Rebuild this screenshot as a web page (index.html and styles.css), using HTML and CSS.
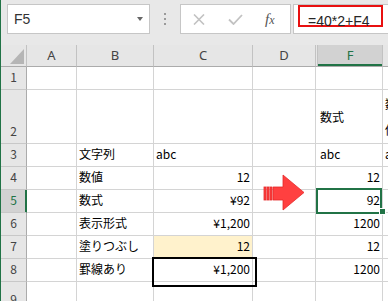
FILE: index.html
```html
<!DOCTYPE html>
<html lang="ja">
<head>
<meta charset="utf-8">
<title>Excel</title>
<link rel="stylesheet" href="styles.css">
</head>
<body>
<div class="app">
  <div class="toolbar">
    <div class="namebox"><span class="nb-text">F5</span><span class="nb-caret"></span></div>
    <div class="grip"><i></i><i></i><i></i></div>
    <div class="fbtns">
      <svg class="ico-x" width="12" height="11" viewBox="0 0 12 11"><path d="M1 0.5 L11 10.5 M11 0.5 L1 10.5" stroke="#c2c2c2" stroke-width="1.6" fill="none"/></svg>
      <svg class="ico-check" width="15" height="11" viewBox="0 0 15 11"><path d="M1 5.5 L5.5 10 L14 1" stroke="#c2c2c2" stroke-width="1.8" fill="none"/></svg>
      <span class="fx"><i class="fx-f">f</i><i class="fx-x">x</i></span>
    </div>
    <div class="finput"><div class="redbox"><span class="formula">=40*2+F4</span></div></div>
  </div>
  <div class="sheet">
    <!-- header row -->
    <div class="hd corner"><span class="tri"></span></div>
    <div class="hd col">A</div>
    <div class="hd col">B</div>
    <div class="hd col">C</div>
    <div class="hd col">D</div>
    <div class="hd col"></div>
    <div class="hd col sel-col">F</div>
    <div class="hd col">G</div>
    <!-- row 1 -->
    <div class="rh">1</div>
    <div class="c"></div><div class="c"></div><div class="c"></div><div class="c"></div><div class="c"></div><div class="c"></div><div class="c"></div>
    <!-- row 2 -->
    <div class="rh">2</div>
    <div class="c"></div><div class="c"></div><div class="c"></div><div class="c"></div><div class="c"></div>
    <div class="c mid">数式</div>
    <div class="c mid"><span class="wrap">数値<br>値</span></div>
    <!-- row 3 -->
    <div class="rh">3</div>
    <div class="c"></div>
    <div class="c">文字列</div>
    <div class="c">abc</div>
    <div class="c"></div><div class="c"></div>
    <div class="c">abc</div>
    <div class="c">abc</div>
    <!-- row 4 -->
    <div class="rh">4</div>
    <div class="c"></div>
    <div class="c">数値</div>
    <div class="c r">12</div>
    <div class="c"></div><div class="c"></div>
    <div class="c r">12</div>
    <div class="c"></div>
    <!-- row 5 -->
    <div class="rh sel-row">5</div>
    <div class="c"></div>
    <div class="c">数式</div>
    <div class="c r">¥92</div>
    <div class="c"></div><div class="c"></div>
    <div class="c r">92</div>
    <div class="c"></div>
    <!-- row 6 -->
    <div class="rh">6</div>
    <div class="c"></div>
    <div class="c">表示形式</div>
    <div class="c r">¥1,200</div>
    <div class="c"></div><div class="c"></div>
    <div class="c r">1200</div>
    <div class="c"></div>
    <!-- row 7 -->
    <div class="rh">7</div>
    <div class="c"></div>
    <div class="c">塗りつぶし</div>
    <div class="c r fill">12</div>
    <div class="c"></div><div class="c"></div>
    <div class="c r">12</div>
    <div class="c"></div>
    <!-- row 8 -->
    <div class="rh">8</div>
    <div class="c"></div>
    <div class="c">罫線あり</div>
    <div class="c r boxed">¥1,200</div>
    <div class="c"></div><div class="c"></div>
    <div class="c r">1200</div>
    <div class="c"></div>
    <!-- row 9 -->
    <div class="rh">9</div>
    <div class="c"></div><div class="c"></div><div class="c"></div><div class="c"></div><div class="c"></div><div class="c"></div><div class="c"></div>

    <div class="selection"></div>
    <div class="handle"></div>
    <svg class="arrow" width="44" height="38" viewBox="0 0 44 38">
      <g fill="#ff4040" stroke="#e52a2a" stroke-width="0.8">
        <rect x="1" y="13" width="2" height="13"/>
        <rect x="4" y="13" width="2" height="13"/>
        <rect x="7" y="13" width="2" height="13"/>
        <path d="M10 13 H20 V1 L41 18.5 L20 36 V26 H10 Z"/>
      </g>
    </svg>
  </div>
</div>
</body>
</html>
```

FILE: styles.css
```css
* { box-sizing: border-box; }
html, body { margin: 0; padding: 0; background: #fff; }
.app {
  width: 388px;
  height: 301px;
  overflow: hidden;
  border-left: 1px solid #217346;
  background: #e8e8e8;
  font-family: "Noto Sans CJK JP", "Noto Sans", sans-serif;
}
.toolbar {
  height: 45px;
  display: flex;
  align-items: flex-start;
  padding: 4px 0 0 6px;
  background: #e8e8e8;
}
.namebox {
  flex: 0 0 143px;
  height: 30px;
  background: #fff;
  border: 1px solid #c6c6c6;
  display: flex;
  align-items: center;
  justify-content: space-between;
  padding: 0 6px 0 6px;
}
.nb-text {
  font-family: "Liberation Sans", Arial, sans-serif;
  font-size: 14px;
  color: #333;
}
.nb-caret {
  width: 0; height: 0;
  border-left: 3px solid transparent;
  border-right: 3px solid transparent;
  border-top: 4px solid #666;
  margin-top: -1px;
}
.grip {
  flex: 0 0 2px;
  margin: 9px 14px 0 14px;
  display: flex;
  flex-direction: column;
  gap: 3px;
}
.grip i { display: block; width: 2px; height: 2px; background: #9a9a9a; }
.fbtns {
  flex: 0 0 111px;
  height: 30px;
  background: #fff;
  border: 1px solid #c6c6c6;
  display: flex;
  align-items: center;
  padding-left: 12px;
}
.ico-x { display: block; margin-right: 23px; }
.ico-check { display: block; margin-right: 22px; }
.fx {
  font-family: "Liberation Serif", serif;
  color: #555;
  font-size: 15px;
  line-height: 1;
}
.fx-f { font-style: italic; }
.fx-x { font-style: italic; font-size: 12px; }
.finput {
  flex: 0 0 110px;
  margin-left: 2px;
  height: 30px;
  background: #fff;
  border: 1px solid #c6c6c6;
  padding-left: 4px;
}
.redbox {
  width: 85px;
  height: 22px;
  border: 2px solid #e81010;
  padding: 3px 0 0 8px;
  line-height: 18px;
}
.formula {
  font-family: "Liberation Sans", Arial, sans-serif;
  font-size: 14px;
  color: #262626;
  white-space: nowrap;
}
.sheet {
  position: relative;
  display: grid;
  grid-template-columns: 26px 50px 77px 99px 63px 2px 65px 80px;
  grid-template-rows: 22px 23px 54px 23px 23px 23px 23px 23px 23px 30px;
  font-size: 12px;
  color: #000;
}
.hd {
  background: #e6e6e6;
  border-right: 1px solid #c2c2c2;
  border-bottom: 1px solid #ababab;
  display: flex;
  align-items: flex-end;
  justify-content: center;
  padding-bottom: 2px;
  font-family: "Noto Sans", sans-serif;
  font-size: 13px;
  line-height: 18px;
  color: #444;
}
.corner { justify-content: flex-end; padding: 0 2px 2px 0; }
.tri {
  display: block;
  width: 14px;
  height: 15px;
  background: #b5b5b5;
  clip-path: polygon(100% 0, 100% 100%, 0 100%);
}
.sel-col {
  background: #d2d2d2;
  color: #217346;
  box-shadow: inset 0 -2px 0 #217346;
}
.rh {
  background: #e6e6e6;
  border-right: 1px solid #ababab;
  border-bottom: 1px solid #c8c8c8;
  display: flex;
  align-items: flex-end;
  justify-content: center;
  padding-bottom: 2px;
  line-height: 20px;
  color: #444;
}
.sel-row {
  background: #d2d2d2;
  color: #217346;
  border-right-color: #217346;
  box-shadow: inset -1px 0 0 #217346;
}
.c {
  position: relative;
  background: #fff;
  border-right: 1px solid #d4d4d4;
  border-bottom: 1px solid #d4d4d4;
  display: flex;
  align-items: flex-end;
  padding: 0 2px 2px 2px;
  line-height: 20px;
  white-space: nowrap;
  min-width: 0;
}
.c.r { justify-content: flex-end; }
.c.mid { align-items: center; padding-bottom: 0; }
.wrap { display: block; line-height: 26px; }
.fill { background: #fff2cc; }
.boxed { z-index: 2; }
.boxed::after {
  content: "";
  position: absolute;
  left: -2px;
  top: -2px;
  width: 101px;
  height: 26px;
  border: 2px solid #000;
}
.selection {
  position: absolute;
  z-index: 3;
  left: 315px;
  top: 143px;
  width: 66px;
  height: 26px;
  border: 2px solid #217346;
}
.handle {
  position: absolute;
  z-index: 4;
  left: 378px;
  top: 163px;
  width: 7px;
  height: 7px;
  background: #217346;
  border: 1px solid #fff;
}
.arrow {
  position: absolute;
  z-index: 3;
  left: 262px;
  top: 129px;
}
```
